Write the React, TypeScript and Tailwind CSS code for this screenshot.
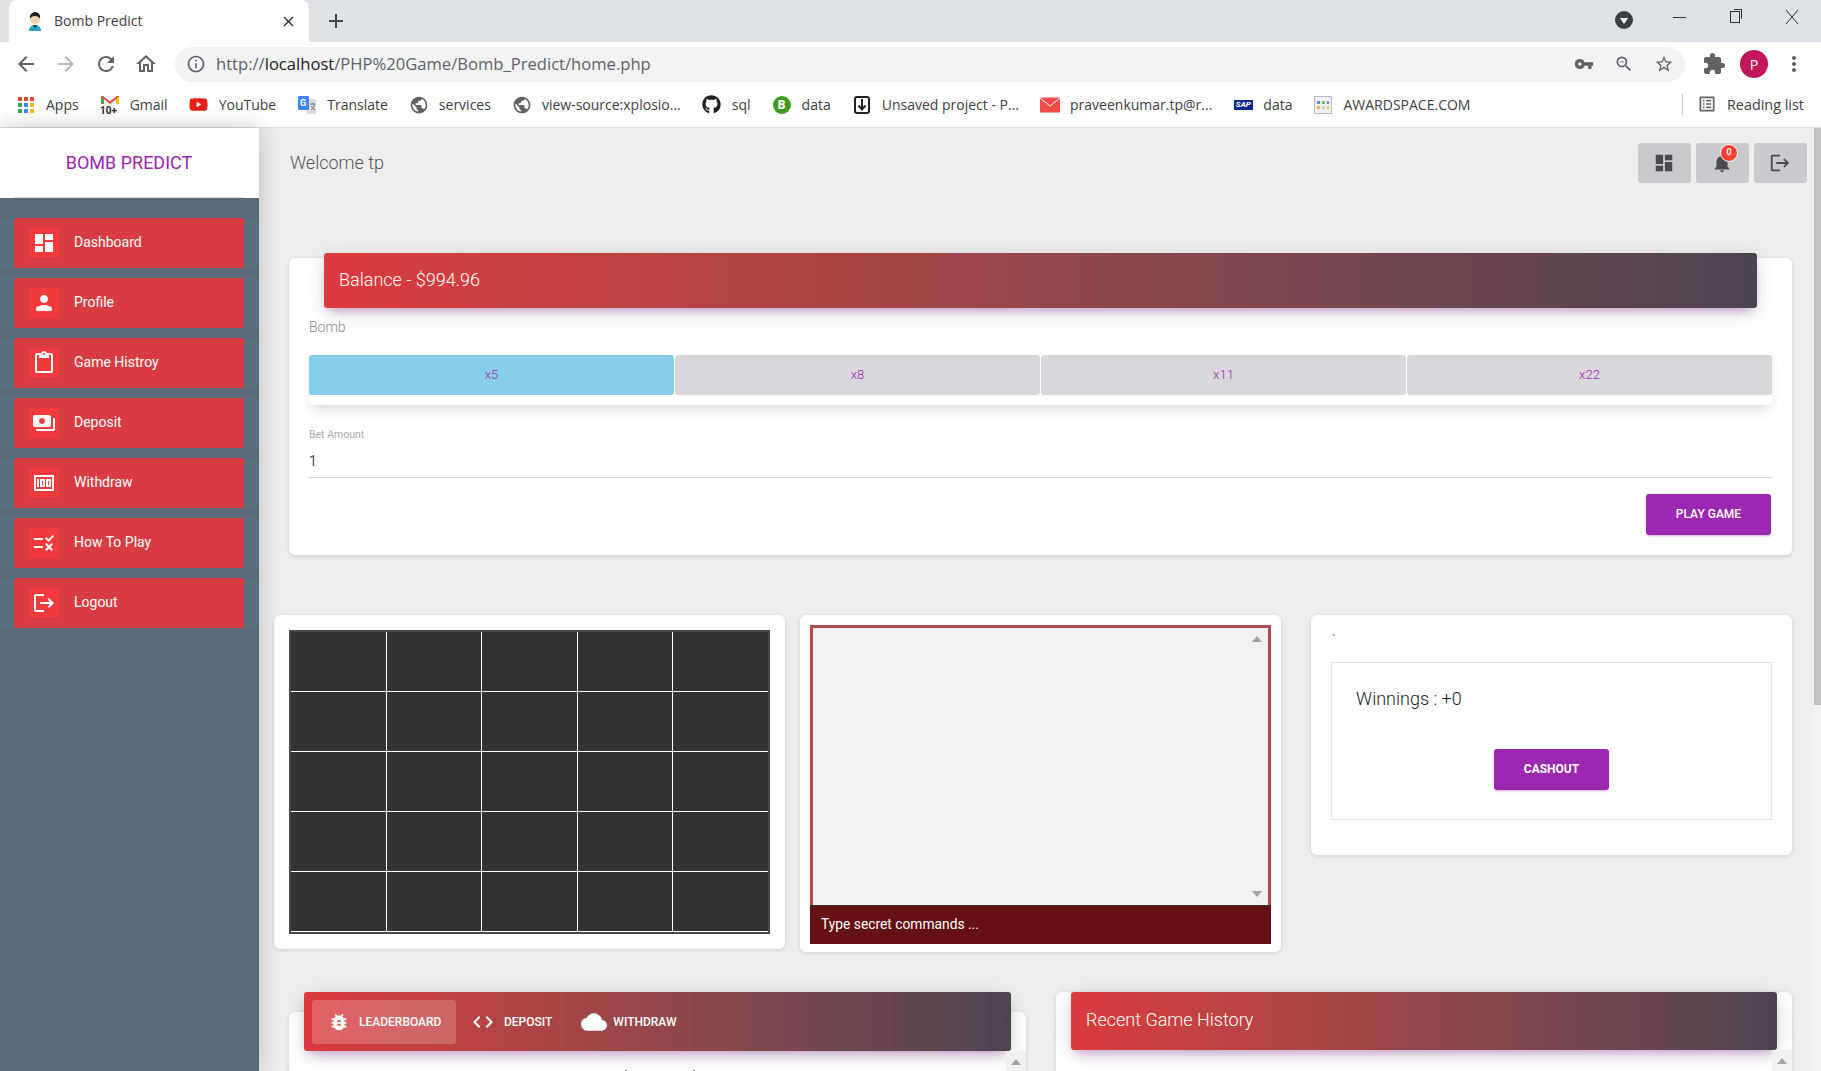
import type { ReactNode } from "react";
import {
  MdArrowBack,
  MdArrowForward,
  MdBugReport,
  MdClose,
  MdCloud,
  MdCode,
  MdContentPaste,
  MdDashboard,
  MdExtension,
  MdInfoOutline,
  MdLogout,
  MdMoney,
  MdMoreVert,
  MdNotifications,
  MdOutlineHome,
  MdOutlineListAlt,
  MdPayments,
  MdPerson,
  MdPublic,
  MdRefresh,
  MdRule,
  MdStarBorder,
  MdVpnKey,
  MdZoomOut,
  MdAdd,
} from "react-icons/md";
import { FaGithub, FaYoutube } from "react-icons/fa";

const menu = [
  { label: "Dashboard", icon: <MdDashboard size={24} /> },
  { label: "Profile", icon: <MdPerson size={24} /> },
  { label: "Game Histroy", icon: <MdContentPaste size={24} /> },
  { label: "Deposit", icon: <MdPayments size={24} /> },
  { label: "Withdraw", icon: <MdMoney size={24} /> },
  { label: "How To Play", icon: <MdRule size={24} /> },
  { label: "Logout", icon: <MdLogout size={24} /> },
];

const headerShadow = "shadow-[0_4px_20px_0_rgba(0,0,0,0.14),0_7px_10px_-5px_rgba(156,39,176,0.4)]";
const cardClass = "rounded-md bg-white shadow-[0_1px_4px_0_rgba(0,0,0,0.14)]";
const gradient = "bg-gradient-to-r from-[#dc3a3c] to-[#4c4350]";

function Apps() {
  const colors = ["#ea4335", "#ea4335", "#ea4335", "#34a853", "#4285f4", "#fbbc05", "#34a853", "#4285f4", "#fbbc05"];
  return (
    <div className="grid w-4 grid-cols-3 gap-[2px]">
      {colors.map((c, i) => (
        <span key={i} className="h-1 w-1" style={{ background: c }} />
      ))}
    </div>
  );
}

function Gmail() {
  return (
    <svg width="20" height="20" viewBox="0 0 20 20">
      <rect x="1" y="1" width="18" height="10" fill="#f4f4f4" />
      <path d="M1 1v8h3V4l6 5 6-5v5h3V1h-2l-7 5.5L3 1z" fill="#ea4335" />
      <path d="M16 4l3-3v8h-3z" fill="#fbbc05" />
      <path d="M1 1l3 3v5H1z" fill="#34a853" />
      <text x="0" y="19" fontSize="10" fontWeight="700" fill="#222" fontFamily="Roboto, sans-serif">10+</text>
    </svg>
  );
}

function TranslateIcon() {
  return (
    <svg width="20" height="20" viewBox="0 0 20 20">
      <path d="M8 4h10a1 1 0 0 1 1 1v14H10z" fill="#dcdcdc" />
      <rect x="1" y="1" width="11" height="14" rx="1" fill="#4285f4" />
      <text x="3" y="11" fontSize="9" fontWeight="700" fill="#fff" fontFamily="Roboto, sans-serif">G</text>
      <path d="M13 9h5M15.500 8v1M14 15c2-1 3-3 3.200-6M14.500 11c.5 2 2 3 3.500 4" stroke="#777" fill="none" />
    </svg>
  );
}

function Favicon() {
  return (
    <svg width="18" height="20" viewBox="0 0 18 20">
      <path d="M3 20c0-4 3-6 6-6s6 2 6 6z" fill="#2aa3c9" />
      <circle cx="9" cy="8" r="5" fill="#f2cfb0" />
      <path d="M4 8c-1-5 3-7 5-7s6 1 5 7c-1-2-2-3-5-3s-4 1-5 3z" fill="#222" />
      <path d="M7 14h4l-2 3z" fill="#222" />
    </svg>
  );
}

function Bookmark({ icon, label }: { icon: ReactNode; label: string }) {
  return (
    <div className="flex shrink-0 items-center gap-[10px]">
      <span className="flex h-5 w-5 items-center justify-center">{icon}</span>
      <span className="whitespace-nowrap">{label}</span>
    </div>
  );
}

function BrowserChrome() {
  return (
    <div className="font-['Open_Sans',sans-serif] text-[#444746]">
      {/* tab strip */}
      <div className="flex h-[42px] items-end bg-[#dee1e6] pl-[9px] text-[#3c4043]">
        <div className="flex h-[42px] w-[300px] items-center rounded-t-lg bg-white pl-[17px] pr-[12px] text-[14px]">
          <Favicon />
          <span className="-mt-[2px] ml-[10px] flex-1">Bomb Predict</span>
          <MdClose size={17} className="text-[#333]" />
        </div>
        <MdAdd size={24} className="mb-[9px] ml-[15px] text-[#444]" />
        <div className="mb-[13px] ml-auto flex items-center pr-[21px] text-[#333]">
          <span className="mt-[6px] flex h-[18px] w-[18px] items-center justify-center rounded-full bg-[#3c4043]">
            <span className="mt-[2px] border-x-[4px] border-t-[6px] border-x-transparent border-t-white" />
          </span>
          <span className="ml-[40px] h-px w-[13px] bg-[#333]" />
          <span className="relative ml-[44px] h-[12px] w-[10px] border border-[#333] bg-[#dee1e6] before:absolute before:-right-[3px] before:-top-[3px] before:h-[10px] before:w-[8px] before:border-r before:border-t before:border-[#333]" />
          <svg width="16" height="16" viewBox="0 0 16 16" className="ml-[44px]" stroke="#333" fill="none">
            <path d="M2 1l12 14M14 1L2 15" />
          </svg>
        </div>
      </div>

      {/* toolbar */}
      <div className="flex h-[44px] items-center bg-white pl-[14px] pr-[15px] text-[#5f6368]">
        <div className="flex items-center gap-4">
          <MdArrowBack size={24} />
          <MdArrowForward size={24} className="text-[#b4b7bb]" />
          <MdRefresh size={24} />
          <MdOutlineHome size={24} />
        </div>
        <div className="ml-[17px] flex h-[35px] flex-1 items-center rounded-full bg-[#f1f3f4] pl-[11px] pr-[11px]">
          <MdInfoOutline size={20} />
          <span className="ml-[10px] flex-1 text-[16.6px] text-[#5f6368]">
            http://<span className="text-[#202124]">localhost</span>/PHP%20Game/Bomb_Predict/home.php
          </span>
          <div className="flex items-center gap-[20px]">
            <MdVpnKey size={20} />
            <MdZoomOut size={20} />
            <MdStarBorder size={20} />
          </div>
        </div>
        <MdExtension size={24} className="ml-[17px]" />
        <span className="ml-[14px] flex h-7 w-7 items-center justify-center rounded-full bg-[#c2185b] text-[14px] text-white">P</span>
        <MdMoreVert size={24} className="ml-[14px]" />
      </div>

      {/* bookmarks */}
      <div className="flex h-[42px] items-center gap-[21px] border-b border-[#dadce0] bg-white pb-[4px] pl-[16px] pr-[17px] text-[14px] text-[#3c4043]">
        <Bookmark icon={<Apps />} label="Apps" />
        <Bookmark icon={<Gmail />} label="Gmail" />
        <Bookmark icon={<FaYoutube size={19} className="text-[#e62117]" />} label="YouTube" />
        <Bookmark icon={<TranslateIcon />} label="Translate" />
        <Bookmark icon={<MdPublic size={20} className="text-[#5f6368]" />} label="services" />
        <Bookmark icon={<MdPublic size={20} className="text-[#5f6368]" />} label="view-source:xplosio..." />
        <Bookmark icon={<FaGithub size={19} className="text-[#222]" />} label="sql" />
        <Bookmark
          icon={<span className="flex h-[18px] w-[18px] items-center justify-center rounded-full bg-[#3f9a1f] text-[12px] font-bold text-white">B</span>}
          label="data"
        />
        <Bookmark
          icon={
            <svg width="16" height="18" viewBox="0 0 16 18" fill="none" stroke="#222">
              <rect x="1" y="1" width="14" height="16" rx="2" strokeWidth="2" />
              <path d="M8 3v10M4.500 9.500L8 13.500l3.500-4" strokeWidth="2" />
            </svg>
          }
          label="Unsaved project - P..."
        />
        <Bookmark
          icon={
            <svg width="20" height="16" viewBox="0 0 20 16">
              <rect width="20" height="15" y="0.500" fill="#f44a4a" />
              <path d="M0 1l10 8 10-8" stroke="#fff" fill="none" />
            </svg>
          }
          label="praveenkumar.tp@r..."
        />
        <Bookmark
          icon={<span className="bg-[#0a2a8c] px-[2px] font-['Roboto',sans-serif] text-[8px] font-bold italic leading-[10px] text-white">SAP</span>}
          label="data"
        />
        <Bookmark
          icon={
            <span className="grid h-[18px] w-[18px] grid-cols-3 content-center gap-[2px] border border-[#b8bcc8] bg-[#eef0f5] p-[2px]">
              <span className="h-[3px] bg-[#5b8ee0]" />
              <span className="h-[3px] bg-[#7bc45a]" />
              <span className="h-[3px] bg-[#5b8ee0]" />
              <span className="h-[3px] bg-[#f0c040]" />
              <span className="h-[3px] bg-[#d0d0d0]" />
              <span className="h-[3px] bg-[#f0c040]" />
            </span>
          }
          label="AWARDSPACE.COM"
        />
        <div className="ml-auto flex items-center gap-[10px] border-l border-[#c8cacd] pl-[14px]">
          <MdOutlineListAlt size={20} className="text-[#5f6368]" />
          <span className="text-[14.4px]">Reading list</span>
        </div>
      </div>
    </div>
  );
}

function Sidebar() {
  return (
    <aside className="relative z-10 w-[259px] shrink-0 bg-[#5b6a79] shadow-[0_0_22px_rgba(0,0,0,0.22)]">
      <div className="bg-white pl-[14px] pr-[15px]">
        <div className="flex h-[70px] items-center justify-center border-b border-[#ddd] text-[18px] text-[#9c27b0]">BOMB PREDICT</div>
      </div>
      <nav className="mt-[20px] flex flex-col gap-[10px]">
        {menu.map((item) => (
          <div key={item.label} className="bg-[#58707f] pl-[14px] pr-[15px]">
            <a className="flex h-[50px] items-center rounded-[3px] bg-[#d83c42] pl-[15px] text-[14px] text-white">
              <span className="flex h-[30px] w-[30px] items-center justify-center bg-[#f23a3c]">{item.icon}</span>
              <span className="-mt-[2px] ml-[15px]">{item.label}</span>
            </a>
          </div>
        ))}
      </nav>
    </aside>
  );
}

function TopBar() {
  const btn = "flex h-10 w-[53px] items-center justify-center rounded-[3px] bg-[#cbc8ce] pr-[2px] text-[#4a4a50]";
  return (
    <div className="flex items-center justify-between pl-[31px] pr-[7px] pt-[15px]">
      <span className="-mt-[2px] text-[18px] font-light text-[#555]">Welcome tp</span>
      <div className="flex gap-[5px]">
        <div className={btn}>
          <MdDashboard size={22} />
        </div>
        <div className={`${btn} relative`}>
          <MdNotifications size={22} />
          <span className="absolute left-[24px] top-[1px] flex h-[18px] w-[18px] items-center justify-center rounded-full border border-white bg-[#f44336] text-[9px] font-medium text-white">0</span>
        </div>
        <div className={btn}>
          <MdLogout size={22} />
        </div>
      </div>
    </div>
  );
}

function BetCard() {
  return (
    <div className={`${cardClass} ml-[30px] mr-[22px] mt-[75px] flow-root h-[297px] px-[20px]`}>
      <div className={`${gradient} ${headerShadow} mx-[15px] -mt-[5px] flex h-[55px] items-center rounded-[3px] pb-[2px] pl-[15px] text-[18px] font-light text-white`}>
        Balance - $994.96
      </div>
      <div className="mt-[11px] text-[14px] font-light leading-[16px] text-[#888]">Bomb</div>
      <div className="mt-[10px] flex h-[60px] items-center gap-px rounded-[3px] bg-white shadow-[0_8px_12px_-4px_rgba(0,0,0,0.16)]">
        {["x5", "x8", "x11", "x22"].map((tab, i) => (
          <div
            key={tab}
            className={`flex h-10 flex-1 items-center justify-center rounded-[3px] text-[13px] font-light text-[#9c27b0] ${i === 0 ? "bg-[#87ceeb]" : "bg-[#d9d6dc]"}`}
          >
            {tab}
          </div>
        ))}
      </div>
      <div className="mt-[24px] text-[10.500px] leading-[12px] text-[#aaa]">Bet Amount</div>
      <div className="mt-[10px] border-b border-[#d2d2d2] pb-[6px] text-[14px] leading-[20px] text-[#495057]">1</div>
      <div className="mt-[16px] flex justify-end pr-[1px]">
        <button className="h-[41px] w-[125px] rounded-[3px] bg-[#9c27b0] pb-[2px] text-[12px] font-medium text-white shadow-[0_2px_2px_0_rgba(156,39,176,0.14),0_3px_1px_-2px_rgba(156,39,176,0.2)]">
          PLAY GAME
        </button>
      </div>
    </div>
  );
}

function Board() {
  return (
    <div className={`${cardClass} h-[334px] w-[511px] shrink-0 p-[15px]`}>
      <div className="grid grid-cols-5 grid-rows-5 gap-px border-2 border-[#4a4a4a] bg-white pb-px">
        {Array.from({ length: 25 }).map((_, i) => (
          <div key={i} className="h-[59px] bg-[#333]" />
        ))}
      </div>
    </div>
  );
}

function Terminal() {
  return (
    <div className={`${cardClass} h-[337px] w-[481px] shrink-0 p-[10px]`}>
      <div className="flex h-[280px] flex-col items-end justify-between border-[3px] border-b-0 border-[#b14a4d] bg-[#f1f1f1] px-[6px] py-[8px]">
        <span className="border-x-[5px] border-b-[6px] border-x-transparent border-b-[#a3a3a3]" />
        <span className="border-x-[5px] border-t-[6px] border-x-transparent border-t-[#a3a3a3]" />
      </div>
      <div className="flex h-[39px] items-center border-t border-[#333] bg-[#651013] pb-[1px] pl-[11px] text-[13.8px] text-white">Type secret commands ...</div>
    </div>
  );
}

function Winnings() {
  return (
    <div className={`${cardClass} h-[240px] w-[481px] shrink-0 px-[20px]`}>
      <div className="h-[47px] pl-px pt-[18px] text-[12px] leading-[14px] text-[#777]">`</div>
      <div className="h-[158px] border border-[#e2e2e8] px-[24px]">
        <div className="mt-[24px] text-[18px] font-light leading-[24px] text-[#222]">Winnings : +0</div>
        <div className="mt-[38px] flex justify-center">
          <button className="h-[41px] w-[115px] rounded-[3px] bg-[#9c27b0] pb-[2px] text-[12px] font-bold text-white shadow-[0_2px_2px_0_rgba(156,39,176,0.14),0_3px_1px_-2px_rgba(156,39,176,0.2)]">
            CASHOUT
          </button>
        </div>
      </div>
    </div>
  );
}

function Leaderboard() {
  return (
    <div className={`${cardClass} h-[100px] w-[737px] shrink-0 px-[15px]`}>
      <div className={`${gradient} ${headerShadow} -mt-[20px] flex h-[59px] items-center rounded-[3px] px-[8px] text-[12px] font-medium text-white`}>
        <div className="flex h-[44px] w-[144px] items-center rounded-[3px] bg-white/20 pl-[16px]">
          <MdBugReport size={22} />
          <span className="ml-[9px]">LEADERBOARD</span>
        </div>
        <div className="ml-[15px] flex items-center">
          <MdCode size={24} />
          <span className="ml-[9px]">DEPOSIT</span>
        </div>
        <div className="ml-[29px] flex items-center">
          <MdCloud size={26} />
          <span className="ml-[6px]">WITHDRAW</span>
        </div>
      </div>
      <div className="-mr-[15px] flex">
        <span className="ml-[321px] mt-[19px] h-px w-[2px] bg-[#666]" />
        <span className="ml-[66px] mt-[19px] h-px w-[2px] bg-[#666]" />
        <div className="ml-auto flex h-[30px] w-5 justify-center bg-[#f1f1f1] pt-[8px]">
          <span className="h-0 border-x-[5px] border-b-[6px] border-x-transparent border-b-[#a3a3a3]" />
        </div>
      </div>
    </div>
  );
}

function RecentHistory() {
  return (
    <div className={`${cardClass} h-[100px] w-[736px] shrink-0 px-[15px]`}>
      <div className={`${gradient} ${headerShadow} -mt-[20px] flex h-[58px] items-center rounded-[3px] pb-[3px] pl-[15px] text-[18px] font-light text-white`}>
        Recent Game History
      </div>
      <div className="-mr-[15px] flex justify-end">
        <div className="flex h-[30px] w-5 justify-center bg-[#f1f1f1] pt-[8px]">
          <span className="h-0 border-x-[5px] border-b-[6px] border-x-transparent border-b-[#a3a3a3]" />
        </div>
      </div>
    </div>
  );
}

export default function App() {
  return (
    <div className="flex h-[1071px] flex-col overflow-hidden bg-[#eee] font-['Roboto',sans-serif]">
      <BrowserChrome />
      <div className="flex min-h-0 flex-1">
        <Sidebar />
        <main className="min-w-0 flex-1 overflow-hidden">
          <TopBar />
          <BetCard />
          <div className="mt-[60px] flex items-start pl-[15px]">
            <Board />
            <div className="ml-[15px]">
              <Terminal />
            </div>
            <div className="ml-[30px]">
              <Winnings />
            </div>
          </div>
          <div className="mt-[60px] flex pl-[30px]">
            <Leaderboard />
            <div className="ml-[30px]">
              <RecentHistory />
            </div>
          </div>
        </main>
        <div className="w-[7px] shrink-0 bg-[#f1f1f1]">
          <div className="h-[577px] bg-[#c1c1c1]" />
        </div>
      </div>
    </div>
  );
}
